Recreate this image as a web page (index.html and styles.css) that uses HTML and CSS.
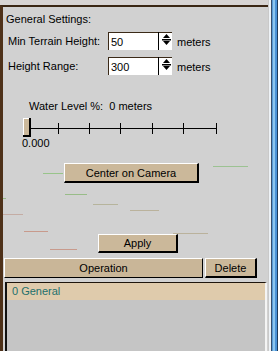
FILE: index.html
```html
<!DOCTYPE html>
<html lang="en">
<head>
    <meta charset="UTF-8">
    <meta name="viewport" content="width=device-width, initial-scale=1.0">
    <title>Terrain Settings</title>
    <link rel="stylesheet" href="styles.css">
</head>
<body>
    <div class="window">
        <div class="panel">
            <svg class="terrain" width="265" height="344" viewBox="0 0 265 344">
                <g stroke-width="1">
                    <line x1="40" y1="166.5" x2="60" y2="166.5" stroke="#98c48a"/>
                    <line x1="210" y1="159.5" x2="245" y2="159.5" stroke="#9cc292"/>
                    <line x1="62" y1="187.5" x2="84" y2="187.5" stroke="#98bc88"/>
                    <line x1="0" y1="191.5" x2="3" y2="191.5" stroke="#98bc88"/>
                    <line x1="90" y1="197.5" x2="115" y2="197.5" stroke="#b6b49c"/>
                    <line x1="0" y1="207.5" x2="20" y2="207.5" stroke="#c4aca4"/>
                    <line x1="21" y1="224.5" x2="45" y2="224.5" stroke="#c89a8c"/>
                    <line x1="47" y1="242.5" x2="74" y2="242.5" stroke="#c89a8c"/>
                    <line x1="127" y1="203.5" x2="156" y2="203.5" stroke="#bab29c"/>
                    <line x1="170" y1="226.5" x2="205" y2="226.5" stroke="#bab29c"/>
                </g>
            </svg>

            <div class="title">General Settings:</div>

            <div class="field">
                <label class="field-label" for="minHeight">Min Terrain Height:</label>
                <input class="num" id="minHeight" type="text" value="50">
                <svg class="spin" width="14" height="18" viewBox="0 0 14 18">
                    <rect width="14" height="18" fill="#fff"/>
                    <rect width="14" height="1" fill="#3b2a18"/>
                    <rect width="1" height="18" fill="#000"/>
                    <polygon points="5,6 12,6 8.5,2" fill="#000"/>
                    <rect x="4" y="7" width="9" height="1.5" fill="#000"/>
                    <polygon points="5,9 12,9 8.5,13" fill="#000"/>
                </svg>
                <span class="unit">meters</span>
            </div>

            <div class="field second">
                <label class="field-label" for="heightRange">Height Range:</label>
                <input class="num" id="heightRange" type="text" value="300">
                <svg class="spin" width="14" height="18" viewBox="0 0 14 18">
                    <rect width="14" height="18" fill="#fff"/>
                    <rect width="14" height="1" fill="#3b2a18"/>
                    <rect width="1" height="18" fill="#000"/>
                    <polygon points="5,6 12,6 8.5,2" fill="#000"/>
                    <rect x="4" y="7" width="9" height="1.5" fill="#000"/>
                    <polygon points="5,9 12,9 8.5,13" fill="#000"/>
                </svg>
                <span class="unit">meters</span>
            </div>

            <div class="water">Water Level %:&nbsp; 0 meters</div>

            <svg class="slider" width="196" height="19" viewBox="0 0 196 19">
                <line x1="8" y1="10.5" x2="194" y2="10.5" stroke="#000"/>
                <g stroke="#000">
                    <line x1="35.5" y1="5" x2="35.5" y2="16"/>
                    <line x1="66.5" y1="5" x2="66.5" y2="16"/>
                    <line x1="97.5" y1="5" x2="97.5" y2="16"/>
                    <line x1="129.5" y1="5" x2="129.5" y2="16"/>
                    <line x1="160.5" y1="5" x2="160.5" y2="16"/>
                    <line x1="193.5" y1="5" x2="193.5" y2="16"/>
                </g>
                <rect x="0" y="0" width="8" height="19" fill="#cbb89a"/>
                <rect x="0" y="0" width="8" height="1" fill="#fff"/>
                <rect x="0" y="0" width="1" height="19" fill="#fff"/>
                <rect x="6" y="0" width="2" height="19" fill="#000"/>
                <rect x="0" y="17" width="8" height="2" fill="#000"/>
            </svg>
            <div class="slider-value">0.000</div>

            <button class="btn center-btn" type="button">Center on Camera</button>
            <button class="btn apply-btn" type="button">Apply</button>

            <div class="list-head">
                <div class="head-cell op">Operation</div>
                <button class="btn del-btn" type="button">Delete</button>
            </div>

            <div class="list">
                <div class="list-row selected">0 General</div>
            </div>
        </div>
        <div class="frame"></div>
    </div>
</body>
</html>
```

FILE: styles.css
```css
body {
    margin: 0;
    padding: 0;
    width: 278px;
    height: 351px;
    overflow: hidden;
    background: #d7d4d3;
    font-family: "Liberation Sans", Arial, sans-serif;
    font-size: 11px;
    color: #000;
}
.window {
    display: flex;
    height: 351px;
}
.panel {
    position: relative;
    width: 268px;
    margin-top: 5px;
    box-sizing: border-box;
    border-top: 2px solid #3a2614;
    border-left: 3px solid #4e3119;
    background: #d1d1d1;
    overflow: hidden;
}
.terrain {
    position: absolute;
    left: 0;
    top: 0;
    z-index: 0;
}
.panel > *:not(.terrain) {
    position: relative;
    z-index: 1;
}
.title {
    margin-top: 6px;
    padding-left: 3px;
    line-height: 13px;
}
.field {
    display: flex;
    align-items: center;
    height: 18px;
    margin-top: 6px;
    padding-left: 5px;
}
.field.second {
    margin-top: 7px;
}
.field-label {
    width: 100px;
    line-height: 13px;
    padding-top: 1px;
}
.num {
    width: 50px;
    height: 18px;
    box-sizing: border-box;
    margin: 0;
    padding: 1px 0 0 2px;
    border: none;
    border-top: 1px solid #3b2a18;
    border-left: 1px solid #3b2a18;
    background: #fff;
    font-family: inherit;
    font-size: 11px;
    color: #000;
    outline: none;
}
.spin {
    display: block;
}
.unit {
    margin-left: 5px;
    padding-top: 1px;
}
.water {
    margin-top: 25px;
    padding-left: 26px;
    line-height: 13px;
}
.slider {
    display: block;
    margin: 5px 0 0 20px;
}
.slider-value {
    padding-left: 19px;
    line-height: 13px;
}
.btn {
    display: block;
    box-sizing: border-box;
    margin: 0;
    padding: 0;
    background: #cbb89a;
    border-style: solid;
    border-width: 1px 2px 2px 1px;
    border-color: #fff #000 #000 #fff;
    font-family: inherit;
    font-size: 11px;
    color: #000;
    text-align: center;
}
.center-btn {
    width: 135px;
    height: 20px;
    margin: 13px 0 0 61px;
}
.apply-btn {
    width: 80px;
    height: 19px;
    margin: 51px 0 0 95px;
}
.list-head {
    display: flex;
    gap: 2px;
    margin: 5px 0 0 1px;
    height: 20px;
}
.head-cell {
    box-sizing: border-box;
    background: #c9b698;
    border-style: solid;
    border-width: 1px;
    border-color: #fff #000 #000 #fff;
    text-align: center;
    line-height: 18px;
}
.op {
    width: 199px;
}
.del-btn {
    width: 52px;
    height: 20px;
}
.list {
    margin: 4px 0 0 2px;
    width: 262px;
    height: 80px;
    box-sizing: border-box;
    border-top: 1px solid #1e150c;
    border-left: 2px solid #111;
    border-right: 2px solid #f4f4f4;
    background: #c5c5c5;
}
.list-row {
    height: 17px;
    line-height: 17px;
    padding-left: 5px;
}
.selected {
    background: #dfcbac;
    color: #23706c;
}
.frame {
    width: 10px;
    height: 351px;
    background: linear-gradient(to right, #c9c9c9 0 1px, #eef2f6 1px 3px, #34506e 3px 4px, #5a9ad4 4px 5px, #8cc6ee 5px 7px, #4a92d6 7px 9px, #1e3c5c 9px 10px);
}
```
